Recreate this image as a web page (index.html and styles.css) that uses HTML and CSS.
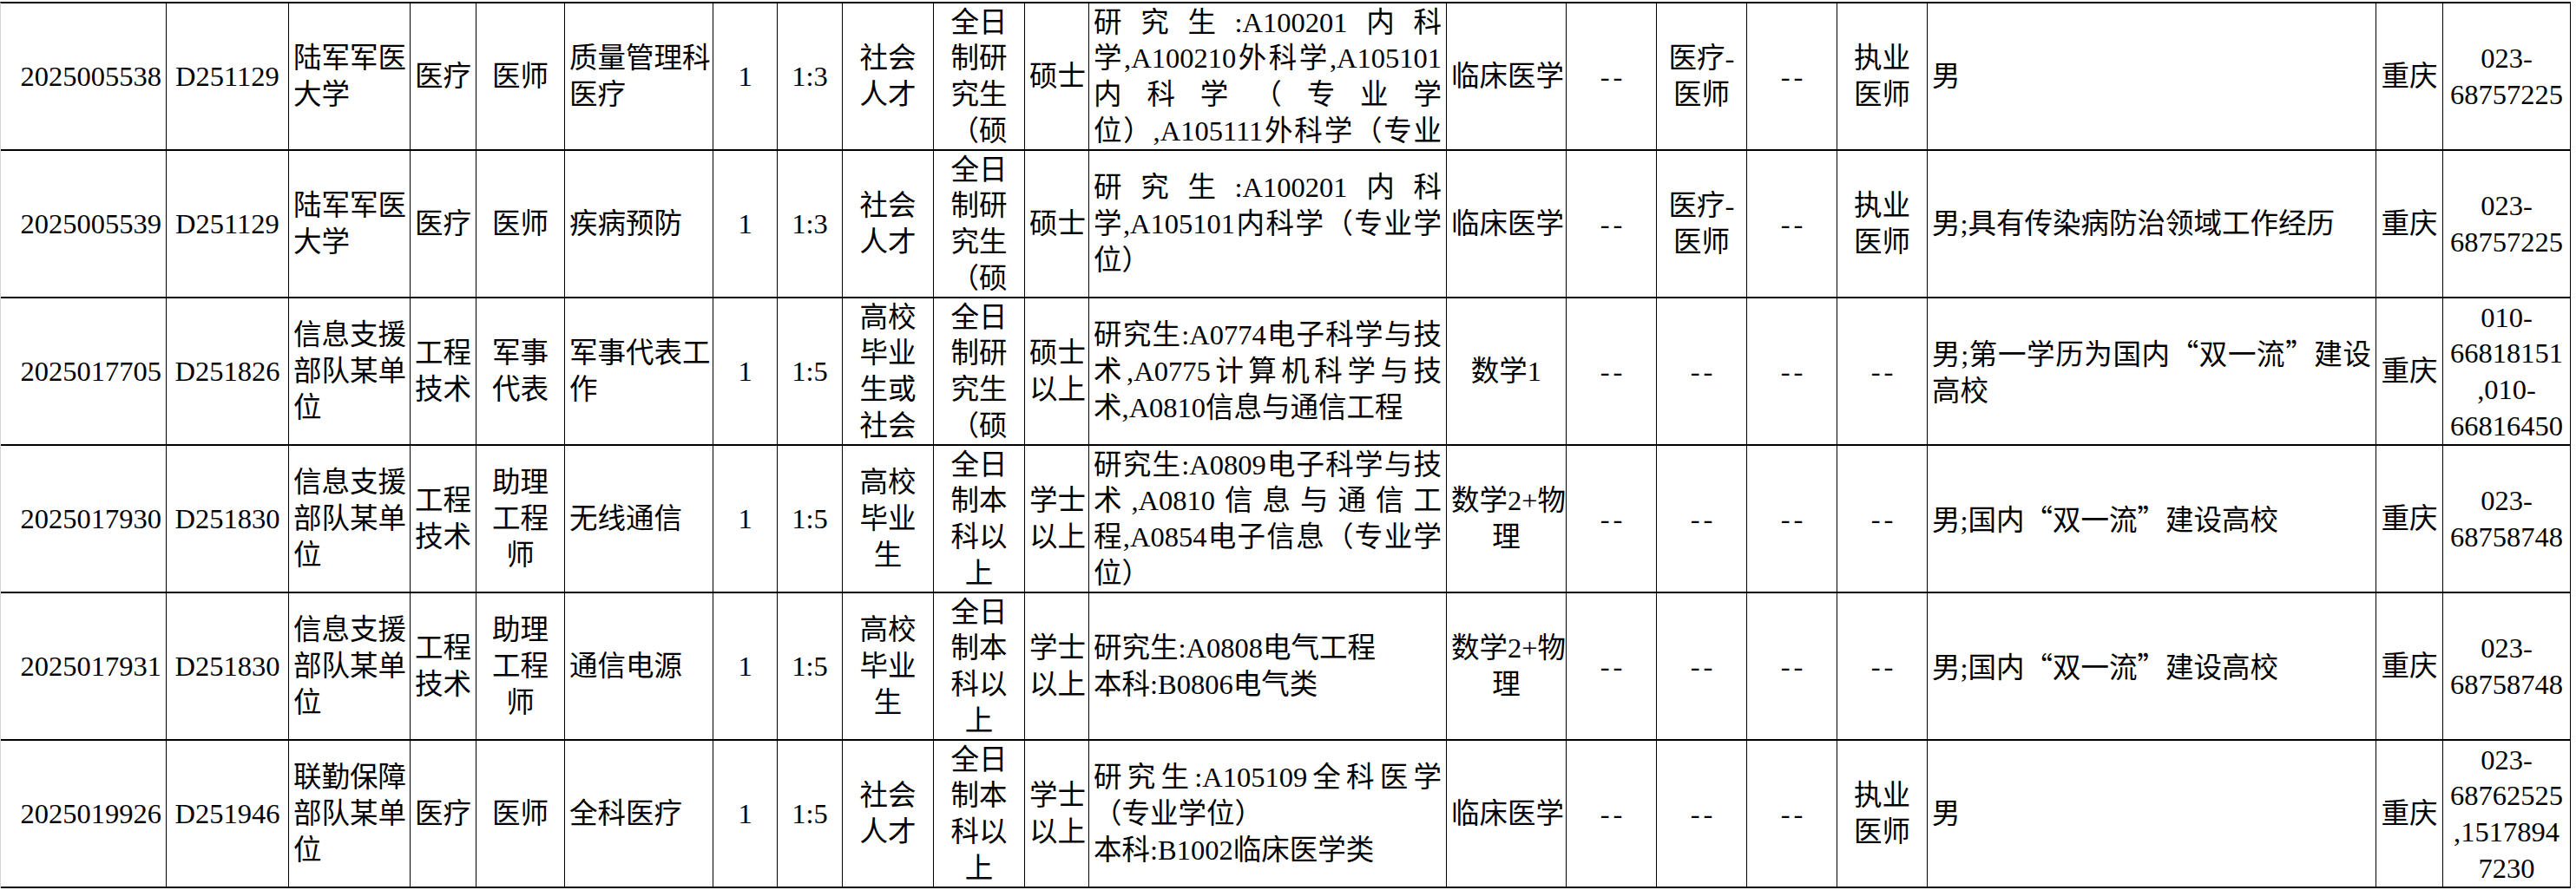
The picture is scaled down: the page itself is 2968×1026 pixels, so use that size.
FILE: index.html
```html
<!DOCTYPE html>
<html lang="zh-CN">
<head>
<meta charset="utf-8">
<title>岗位表</title>
<link rel="stylesheet" href="styles.css">
</head>
<body>
<div class="sheet">
  <!-- Row 1 -->
  <div class="c r"><span class="ln">2025005538</span></div>
  <div class="c"><span class="ln">D251129</span></div>
  <div class="c l"><span class="ln">陆军军医</span><span class="ln">大学</span></div>
  <div class="c"><span class="ln">医疗</span></div>
  <div class="c"><span class="ln">医师</span></div>
  <div class="c l"><span class="ln">质量管理科</span><span class="ln">医疗</span></div>
  <div class="c"><span class="ln">1</span></div>
  <div class="c"><span class="ln">1:3</span></div>
  <div class="c"><span class="ln">社会</span><span class="ln">人才</span></div>
  <div class="c"><span class="ln">全日</span><span class="ln">制研</span><span class="ln">究生</span><span class="ln">（硕</span></div>
  <div class="c"><span class="ln">硕士</span></div>
  <div class="c l"><span class="ln j">研究生:A100201内科</span><span class="ln j">学,A100210外科学,A105101</span><span class="ln j">内科学（专业学</span><span class="ln j">位）,A105111外科学（专业</span></div>
  <div class="c"><span class="ln">临床医学</span></div>
  <div class="c"><span class="ln d">--</span></div>
  <div class="c"><span class="ln">医疗-</span><span class="ln">医师</span></div>
  <div class="c"><span class="ln d">--</span></div>
  <div class="c"><span class="ln">执业</span><span class="ln">医师</span></div>
  <div class="c l"><span class="ln">男</span></div>
  <div class="c"><span class="ln">重庆</span></div>
  <div class="c"><span class="ln">023-</span><span class="ln">68757225</span></div>

  <!-- Row 2 -->
  <div class="c r"><span class="ln">2025005539</span></div>
  <div class="c"><span class="ln">D251129</span></div>
  <div class="c l"><span class="ln">陆军军医</span><span class="ln">大学</span></div>
  <div class="c"><span class="ln">医疗</span></div>
  <div class="c"><span class="ln">医师</span></div>
  <div class="c l"><span class="ln">疾病预防</span></div>
  <div class="c"><span class="ln">1</span></div>
  <div class="c"><span class="ln">1:3</span></div>
  <div class="c"><span class="ln">社会</span><span class="ln">人才</span></div>
  <div class="c"><span class="ln">全日</span><span class="ln">制研</span><span class="ln">究生</span><span class="ln">（硕</span></div>
  <div class="c"><span class="ln">硕士</span></div>
  <div class="c l"><span class="ln j">研究生:A100201内科</span><span class="ln j">学,A105101内科学（专业学</span><span class="ln">位）</span></div>
  <div class="c"><span class="ln">临床医学</span></div>
  <div class="c"><span class="ln d">--</span></div>
  <div class="c"><span class="ln">医疗-</span><span class="ln">医师</span></div>
  <div class="c"><span class="ln d">--</span></div>
  <div class="c"><span class="ln">执业</span><span class="ln">医师</span></div>
  <div class="c l"><span class="ln">男;具有传染病防治领域工作经历</span></div>
  <div class="c"><span class="ln">重庆</span></div>
  <div class="c"><span class="ln">023-</span><span class="ln">68757225</span></div>

  <!-- Row 3 -->
  <div class="c r"><span class="ln">2025017705</span></div>
  <div class="c"><span class="ln">D251826</span></div>
  <div class="c l"><span class="ln">信息支援</span><span class="ln">部队某单</span><span class="ln">位</span></div>
  <div class="c"><span class="ln">工程</span><span class="ln">技术</span></div>
  <div class="c"><span class="ln">军事</span><span class="ln">代表</span></div>
  <div class="c l"><span class="ln">军事代表工</span><span class="ln">作</span></div>
  <div class="c"><span class="ln">1</span></div>
  <div class="c"><span class="ln">1:5</span></div>
  <div class="c"><span class="ln">高校</span><span class="ln">毕业</span><span class="ln">生或</span><span class="ln">社会</span></div>
  <div class="c"><span class="ln">全日</span><span class="ln">制研</span><span class="ln">究生</span><span class="ln">（硕</span></div>
  <div class="c"><span class="ln">硕士</span><span class="ln">以上</span></div>
  <div class="c l"><span class="ln j">研究生:A0774电子科学与技</span><span class="ln j">术,A0775计算机科学与技</span><span class="ln">术,A0810信息与通信工程</span></div>
  <div class="c"><span class="ln">数学1</span></div>
  <div class="c"><span class="ln d">--</span></div>
  <div class="c"><span class="ln d">--</span></div>
  <div class="c"><span class="ln d">--</span></div>
  <div class="c"><span class="ln d">--</span></div>
  <div class="c l"><span class="ln j">男;第一学历为国内<span class="q">“</span>双一流<span class="q">”</span>建设</span><span class="ln">高校</span></div>
  <div class="c"><span class="ln">重庆</span></div>
  <div class="c"><span class="ln">010-</span><span class="ln">66818151</span><span class="ln">,010-</span><span class="ln">66816450</span></div>

  <!-- Row 4 -->
  <div class="c r"><span class="ln">2025017930</span></div>
  <div class="c"><span class="ln">D251830</span></div>
  <div class="c l"><span class="ln">信息支援</span><span class="ln">部队某单</span><span class="ln">位</span></div>
  <div class="c"><span class="ln">工程</span><span class="ln">技术</span></div>
  <div class="c"><span class="ln">助理</span><span class="ln">工程</span><span class="ln">师</span></div>
  <div class="c l"><span class="ln">无线通信</span></div>
  <div class="c"><span class="ln">1</span></div>
  <div class="c"><span class="ln">1:5</span></div>
  <div class="c"><span class="ln">高校</span><span class="ln">毕业</span><span class="ln">生</span></div>
  <div class="c"><span class="ln">全日</span><span class="ln">制本</span><span class="ln">科以</span><span class="ln">上</span></div>
  <div class="c"><span class="ln">学士</span><span class="ln">以上</span></div>
  <div class="c l"><span class="ln j">研究生:A0809电子科学与技</span><span class="ln j">术,A0810信息与通信工</span><span class="ln j">程,A0854电子信息（专业学</span><span class="ln">位）</span></div>
  <div class="c"><span class="ln">数学2+物</span><span class="ln">理</span></div>
  <div class="c"><span class="ln d">--</span></div>
  <div class="c"><span class="ln d">--</span></div>
  <div class="c"><span class="ln d">--</span></div>
  <div class="c"><span class="ln d">--</span></div>
  <div class="c l"><span class="ln">男;国内<span class="q">“</span>双一流<span class="q">”</span>建设高校</span></div>
  <div class="c"><span class="ln">重庆</span></div>
  <div class="c"><span class="ln">023-</span><span class="ln">68758748</span></div>

  <!-- Row 5 -->
  <div class="c r"><span class="ln">2025017931</span></div>
  <div class="c"><span class="ln">D251830</span></div>
  <div class="c l"><span class="ln">信息支援</span><span class="ln">部队某单</span><span class="ln">位</span></div>
  <div class="c"><span class="ln">工程</span><span class="ln">技术</span></div>
  <div class="c"><span class="ln">助理</span><span class="ln">工程</span><span class="ln">师</span></div>
  <div class="c l"><span class="ln">通信电源</span></div>
  <div class="c"><span class="ln">1</span></div>
  <div class="c"><span class="ln">1:5</span></div>
  <div class="c"><span class="ln">高校</span><span class="ln">毕业</span><span class="ln">生</span></div>
  <div class="c"><span class="ln">全日</span><span class="ln">制本</span><span class="ln">科以</span><span class="ln">上</span></div>
  <div class="c"><span class="ln">学士</span><span class="ln">以上</span></div>
  <div class="c l"><span class="ln">研究生:A0808电气工程</span><span class="ln">本科:B0806电气类</span></div>
  <div class="c"><span class="ln">数学2+物</span><span class="ln">理</span></div>
  <div class="c"><span class="ln d">--</span></div>
  <div class="c"><span class="ln d">--</span></div>
  <div class="c"><span class="ln d">--</span></div>
  <div class="c"><span class="ln d">--</span></div>
  <div class="c l"><span class="ln">男;国内<span class="q">“</span>双一流<span class="q">”</span>建设高校</span></div>
  <div class="c"><span class="ln">重庆</span></div>
  <div class="c"><span class="ln">023-</span><span class="ln">68758748</span></div>

  <!-- Row 6 -->
  <div class="c r"><span class="ln">2025019926</span></div>
  <div class="c"><span class="ln">D251946</span></div>
  <div class="c l"><span class="ln">联勤保障</span><span class="ln">部队某单</span><span class="ln">位</span></div>
  <div class="c"><span class="ln">医疗</span></div>
  <div class="c"><span class="ln">医师</span></div>
  <div class="c l"><span class="ln">全科医疗</span></div>
  <div class="c"><span class="ln">1</span></div>
  <div class="c"><span class="ln">1:5</span></div>
  <div class="c"><span class="ln">社会</span><span class="ln">人才</span></div>
  <div class="c"><span class="ln">全日</span><span class="ln">制本</span><span class="ln">科以</span><span class="ln">上</span></div>
  <div class="c"><span class="ln">学士</span><span class="ln">以上</span></div>
  <div class="c l"><span class="ln j">研究生:A105109全科医学</span><span class="ln">（专业学位）</span><span class="ln">本科:B1002临床医学类</span></div>
  <div class="c"><span class="ln">临床医学</span></div>
  <div class="c"><span class="ln d">--</span></div>
  <div class="c"><span class="ln d">--</span></div>
  <div class="c"><span class="ln d">--</span></div>
  <div class="c"><span class="ln">执业</span><span class="ln">医师</span></div>
  <div class="c l"><span class="ln">男</span></div>
  <div class="c"><span class="ln">重庆</span></div>
  <div class="c"><span class="ln">023-</span><span class="ln">68762525</span><span class="ln">,1517894</span><span class="ln">7230</span></div>
</div>
</body>
</html>
```

FILE: styles.css
```css
html, body {
  margin: 0;
  padding: 0;
  background: #ffffff;
}

body {
  font-family: "Liberation Serif", "Noto Sans CJK SC", serif;
  font-size: 32.5px;
  line-height: 41.67px;
  color: #000000;
}

.sheet {
  margin-top: 2px;
  display: grid;
  grid-template-columns: 191px 141px 140px 76px 102px 171px 74px 75px 105px 105px 74px 412px 138px 104px 104px 104px 104px 517px 77px 147px;
  grid-auto-rows: 170px;
  width: max-content;
  border-top: 2px solid #000000;
  border-left: 1px solid #d4d4d4;
}

.c {
  box-sizing: border-box;
  border-right: 1px solid #000000;
  border-bottom: 2px solid #000000;
  padding: 2px 5px 0 5px;
  display: flex;
  flex-direction: column;
  justify-content: center;
  text-align: center;
  overflow: hidden;
  white-space: nowrap;
}

.l {
  text-align: left;
}

.r {
  text-align: right;
}

.ln {
  display: block;
}

.d {
  letter-spacing: 4px;
  text-indent: 4px;
}

.j {
  white-space: normal;
  text-align: justify;
  text-align-last: justify;
}

.q {
  font-family: "Noto Sans CJK SC", sans-serif;
}
```
